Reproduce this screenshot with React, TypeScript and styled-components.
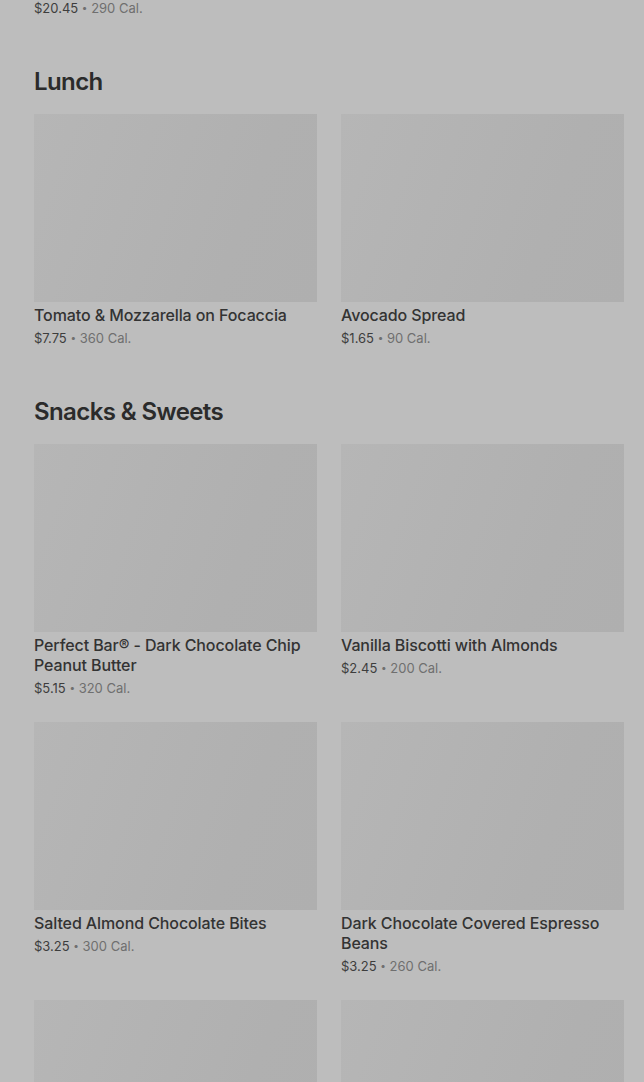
import React from "react";
import styled, { createGlobalStyle } from "styled-components";

const Global = createGlobalStyle`
  html, body { margin: 0; padding: 0; background: #bdbdbd; }
  body { font-family: Inter, "Noto Sans", Roboto, sans-serif; -webkit-font-smoothing: antialiased; }
  * { box-sizing: border-box; }
`;

const Page = styled.main`
  padding: 0 20px 0 34px;
  background: #bdbdbd;
  min-height: 1082px;
  overflow: hidden;
`;

const TopMeta = styled.div`
  margin-top: -5px;
`;

const Section = styled.section`
  margin-top: 48px;
`;

const Heading = styled.h2`
  margin: 0 0 16px;
  font-size: 24px;
  line-height: 32px;
  font-weight: 600;
  color: #2b2b2b;
  letter-spacing: -0.6px;
`;

const Grid = styled.div`
  display: grid;
  grid-template-columns: 1fr 1fr;
  column-gap: 24px;
  row-gap: 24px;
`;

const Card = styled.div`
  display: flex;
  flex-direction: column;
`;

const Thumb = styled.div`
  height: 188px;
  background: linear-gradient(110deg, #b6b6b6 0%, #b3b3b3 35%, #b0b0b0 70%, #afafaf 100%);
`;

const Title = styled.div`
  margin-top: 3px;
  font-size: 16px;
  line-height: 20px;
  font-weight: 500;
  color: #333333;
  letter-spacing: -0.1px;
`;

const Meta = styled.div`
  margin-top: 3px;
  height: 20px;
  font-size: 13px;
  line-height: 20px;
  color: #3d3d3d;
`;

const Cal = styled.span`
  color: #6f6f6f;
`;

const Dot = styled.span`
  display: inline-block;
  line-height: 0;
  font-size: 10px;
  vertical-align: 2px;
  color: #6f6f6f;
`;

type Item = { name: string; price: string; cal: string };

const lunch: Item[] = [
  { name: "Tomato & Mozzarella on Focaccia", price: "$7.75", cal: "360 Cal." },
  { name: "Avocado Spread", price: "$1.65", cal: "90 Cal." },
];

const snacks: Item[] = [
  { name: "Perfect Bar® - Dark Chocolate Chip Peanut Butter", price: "$5.15", cal: "320 Cal." },
  { name: "Vanilla Biscotti with Almonds", price: "$2.45", cal: "200 Cal." },
  { name: "Salted Almond Chocolate Bites", price: "$3.25", cal: "300 Cal." },
  { name: "Dark Chocolate Covered Espresso Beans", price: "$3.25", cal: "260 Cal." },
  { name: "", price: "", cal: "" },
  { name: "", price: "", cal: "" },
];

const PriceLine = ({ price, cal }: { price: string; cal: string }) => (
  <Meta>
    {price} <Dot>•</Dot> <Cal>{cal}</Cal>
  </Meta>
);

const ItemCard = ({ item }: { item: Item }) => (
  <Card>
    <Thumb />
    {item.name && <Title>{item.name}</Title>}
    {item.price && <PriceLine price={item.price} cal={item.cal} />}
  </Card>
);

export default function App() {
  return (
    <>
      <Global />
      <Page>
        <TopMeta>
          <PriceLine price="$20.45" cal="290 Cal." />
        </TopMeta>
        <Section>
          <Heading>Lunch</Heading>
          <Grid>
            {lunch.map((it, i) => (
              <ItemCard key={i} item={it} />
            ))}
          </Grid>
        </Section>
        <Section>
          <Heading>Snacks &amp; Sweets</Heading>
          <Grid>
            {snacks.map((it, i) => (
              <ItemCard key={i} item={it} />
            ))}
          </Grid>
        </Section>
      </Page>
    </>
  );
}
